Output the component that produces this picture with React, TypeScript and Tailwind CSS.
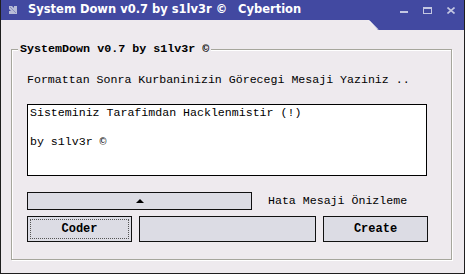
export default function App() {
  return (
    <div className="relative w-[465px] h-[274px] bg-[#eeeaee] border-x border-b border-[#1e1e1e] overflow-hidden font-['Liberation_Mono',monospace] text-black">
      <TitleBar />
      <div className="pt-[29px] pl-[10px]">
        <div className="relative w-[441px] h-[211px] border border-[#a6a69c] shadow-[inset_1px_1px_0_white,1px_1px_0_white] pl-[15px] pt-[23px]">
          <span className="absolute -top-[8px] left-[6px] px-[2px] bg-[#eeeaee] font-bold text-[11.7px] leading-[14px]">
            SystemDown v0.7 by s1lv3r ©
          </span>
          <p className="text-[11.6px] leading-[14px]">
            Formattan Sonra Kurbaninizin Görecegi Mesaji Yaziniz ..
          </p>
          <div className="mt-[17px] w-[400px] h-[72px] bg-white border border-black pl-[2px] pt-[1px] text-[11.6px] leading-[14.5px] whitespace-pre">
            {"Sisteminiz Tarafimdan Hacklenmistir (!)\n\nby s1lv3r ©"}
          </div>
          <div className="mt-[16px] flex items-center">
            <div className="w-[225px] h-[18px] bg-[#dcdce4] border border-[#111] flex items-center justify-center">
              <span className="w-0 h-0 border-x-[4px] border-x-transparent border-b-[4px] border-b-black" />
            </div>
            <span className="ml-[16px] text-[11.6px] leading-[14px]">Hata Mesaji Önizleme</span>
          </div>
          <div className="mt-[6px] flex gap-[7px]">
            <Button label="Coder" focused />
            <div className="w-[177px] h-[26px] bg-[#dcdce4] border border-[#111]" />
            <Button label="Create" />
          </div>
        </div>
      </div>
    </div>
  );
}

function TitleBar() {
  return (
    <>
      <div className="h-[20px] bg-[#4249a1] flex items-center text-white font-['DejaVu_Sans',sans-serif] font-bold text-[11.5px]">
        <svg width="8" height="8" viewBox="0 0 8 8" className="ml-[8px] mr-[11px]">
          <polygon points="0,0 3,0 5,2 5,0 8,0 8,8 0,8 0,5 2,5 0,3" fill="#b8bcd8" />
          <polygon points="1,1 7,7" stroke="#8a8fbd" />
        </svg>
        <span className="w-[210px]">System Down v0.7 by s1lv3r ©</span>
        <span>Cybertion</span>
        <div className="ml-auto flex items-center gap-[15px] mr-[9px]">
          <span className="w-[8px] h-[2px] bg-[#c4c7e2] mt-[4px]" />
          <span className="w-[9px] h-[7px] border border-t-2 border-[#c4c7e2]" />
          <svg width="8" height="7" viewBox="0 0 8 7">
            <path d="M0.5 0.5 L7.5 6.5 M7.5 0.5 L0.5 6.5" stroke="#c4c7e2" strokeWidth="1.6" />
          </svg>
        </div>
      </div>
      <svg width="95" height="10" viewBox="0 0 95 10" className="absolute top-[20px] right-0">
        <polygon points="0,0 95,0 95,10 9,10" fill="#4249a1" />
        <path d="M0 0.5 L9 9.5" stroke="white" strokeWidth="1" />
      </svg>
    </>
  );
}

function Button({ label, focused }: { label: string; focused?: boolean }) {
  return (
    <div className="w-[105px] h-[26px] bg-[#dcdce4] border border-[#111] p-[2px]">
      <div
        className={
          focused
            ? "w-full h-full border border-dotted border-[#555] flex items-center justify-center font-bold text-[12px]"
            : "w-full h-full flex items-center justify-center font-bold text-[12px]"
        }
      >
        {label}
      </div>
    </div>
  );
}
